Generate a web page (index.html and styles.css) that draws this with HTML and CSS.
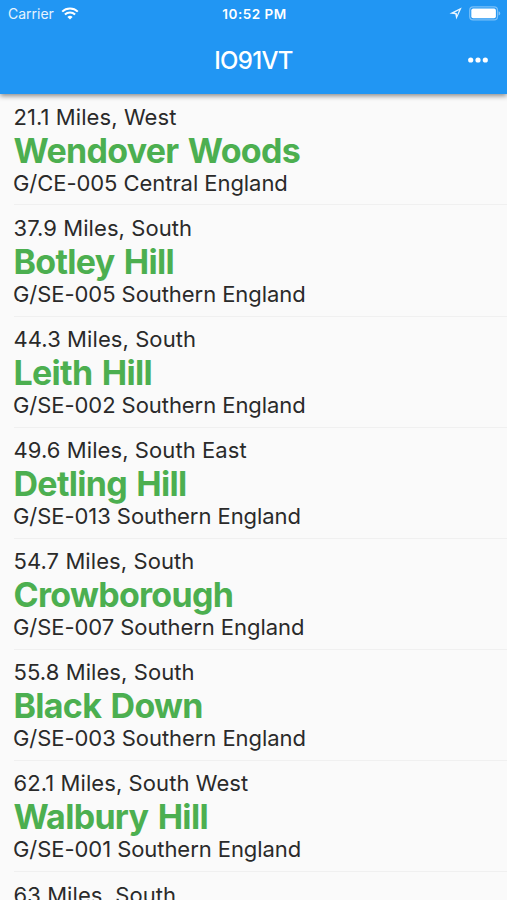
FILE: index.html
```html
<!DOCTYPE html>
<html lang="en"><head><meta charset="utf-8"><title>IO91VT</title><link rel="stylesheet" href="styles.css"></head>
<body>
<header class="top">
<div class="status"><div class="left"><span class="carrier">Carrier</span>
<svg class="wifi" width="18" height="13" viewBox="0 0 18 13" fill="none" stroke="#fff" stroke-width="2"><path d="M1.2 4.6a11.2 11.2 0 0 1 15.6 0M3.9 7.5a7.3 7.3 0 0 1 10.2 0"/><path d="M9 12.6L6.4 10a3.7 3.7 0 0 1 5.2 0z" fill="#fff" stroke="none"/></svg></div>
<span class="time">10:52 PM</span>
<div class="right"><svg class="location" width="13" height="13" viewBox="0 0 13 13"><path fill="#fff" fill-opacity=".9" fill-rule="evenodd" d="M12.7.6L7.3 12.6 6.3 7.2.5 6.5zM10 3.2L5.3 5.7l2.4.4.4 1.8z"/></svg>
<svg width="32" height="15" viewBox="0 0 32 15"><rect x=".7" y=".9" width="27.8" height="13" rx="3.4" fill="none" stroke="#fff" stroke-opacity=".4" stroke-width="1.2"/><rect x="2.3" y="2.6" width="24.6" height="9.6" rx="1.8" fill="#fff"/><path d="M29.6 5.2v4.4q1.7-.6 1.7-2.2t-1.7-2.2z" fill="#fff" fill-opacity=".45"/></svg></div></div>
<div class="bar"><h1>IO91VT</h1><svg class="more" width="22" height="6" viewBox="0 0 22 6" fill="#fff"><circle cx="2.7" cy="3" r="2.6"/><circle cx="10" cy="3" r="2.6"/><circle cx="17.3" cy="3" r="2.6"/></svg></div>
</header>
<main class="list">
<article class="row"><p class="distance">21.1 Miles, West</p><h2>Wendover Woods</h2><p>G/CE-005 Central England</p></article>
<article class="row"><p class="distance">37.9 Miles, South</p><h2>Botley Hill</h2><p>G/SE-005 Southern England</p></article>
<article class="row"><p class="distance">44.3 Miles, South</p><h2>Leith Hill</h2><p>G/SE-002 Southern England</p></article>
<article class="row"><p class="distance">49.6 Miles, South East</p><h2>Detling Hill</h2><p>G/SE-013 Southern England</p></article>
<article class="row"><p class="distance">54.7 Miles, South</p><h2>Crowborough</h2><p>G/SE-007 Southern England</p></article>
<article class="row"><p class="distance">55.8 Miles, South</p><h2>Black Down</h2><p>G/SE-003 Southern England</p></article>
<article class="row"><p class="distance">62.1 Miles, South West</p><h2>Walbury Hill</h2><p>G/SE-001 Southern England</p></article>
<article class="row"><p class="distance">63 Miles, South</p></article>
</main></body></html>
```
FILE: styles.css
```css
* { box-sizing: border-box; margin: 0; }
body { height: 900px; overflow: hidden; display: flex; flex-direction: column; background: #fafafa; color: #2a2a2a; font-family: Inter, "Liberation Sans", sans-serif; }
.top { flex: none; height: 94px; background: #2196f3; color: #fff; box-shadow: 0 2px 5px rgba(0,0,0,.45); z-index: 1; }
.status { height: 27px; display: grid; grid-template-columns: 1fr auto 1fr; align-items: center; padding: 0 6px 0 8px; font-size: 14px; }
.left, .right { display: flex; align-items: center; gap: 7px; }
.carrier { color: #e6f3fe; }
.wifi { margin-top: -1px; }
.right { justify-content: flex-end; }
.time { font-size: 13.5px; font-weight: 600; letter-spacing: .5px; }
.bar { height: 66px; display: grid; grid-template-columns: 1fr auto 1fr; align-items: center; padding: 0 17px; }
h1 { grid-column: 2; font-size: 24px; font-weight: 500; letter-spacing: -.7px; }
.more { justify-self: end; }
.list { flex: 1; min-height: 0; overflow: hidden; }
.row { height: 111.15px; margin-left: 14px; padding-top: 9.4px; border-bottom: 1px solid #f0f0f0; white-space: nowrap; }
.row:first-child { height: 111.4px; padding-top: 10px; }
.row p { margin-left: -1px; font-size: 22px; line-height: 27px; letter-spacing: -.06px; }
.row .distance { margin-left: -.5px; letter-spacing: .08px; }
.row h2 { margin-left: -.5px; color: #4caf50; font-size: 34px; line-height: 39px; font-weight: 700; letter-spacing: -.7px; word-spacing: 2px; }
```
